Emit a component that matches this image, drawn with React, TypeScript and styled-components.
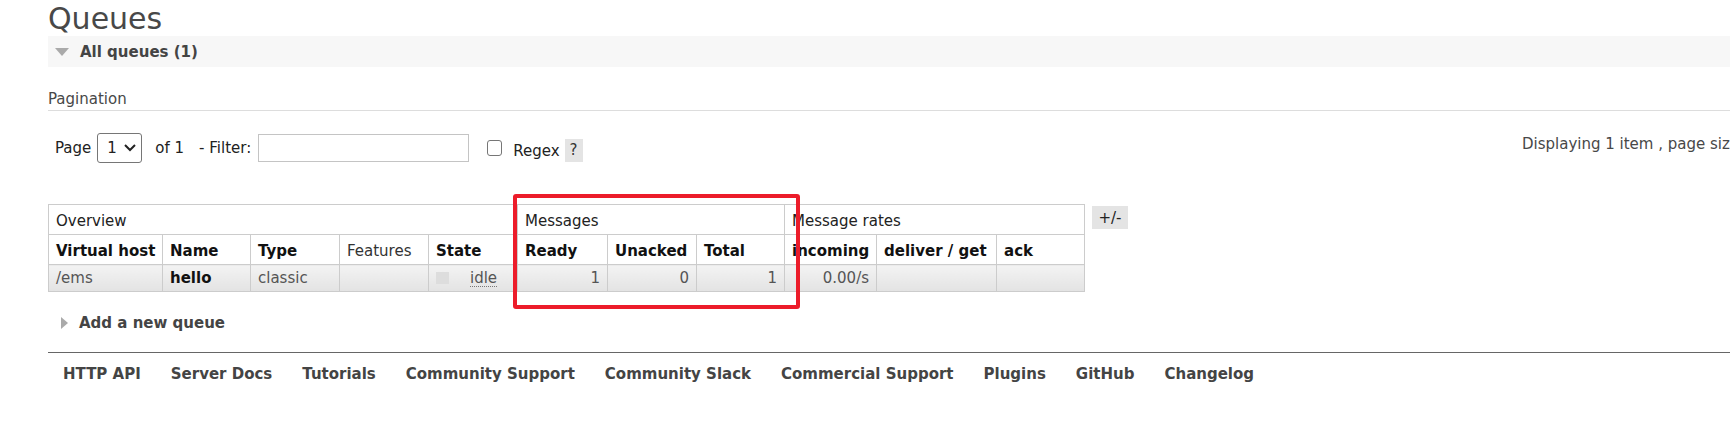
import styled, { createGlobalStyle } from 'styled-components';

const GlobalStyle = createGlobalStyle`
  html, body {
    margin: 0;
    padding: 0;
    overflow: hidden;
    background: #fff;
  }
  body {
    font-family: "DejaVu Sans", Verdana, sans-serif;
    font-size: 15px;
    color: #484848;
  }
`;

const Page = styled.div`
  position: relative;
  width: 1800px;
  padding-left: 48px;
  box-sizing: border-box;
`;

const Title = styled.h1`
  margin: 0;
  padding-top: 1px;
  font-size: 30px;
  line-height: 35px;
  font-weight: normal;
  color: #484848;
`;

const SectionBar = styled.div<{ $shaded?: boolean }>`
  display: flex;
  align-items: center;
  gap: 11px;
  height: 31px;
  padding-left: ${(p) => (p.$shaded ? '7px' : '13px')};
  background: ${(p) => (p.$shaded ? '#f7f7f7' : 'transparent')};
  font-weight: bold;
  color: #444;
`;

const SubHeading = styled.h3`
  margin: 23px 0 0;
  padding-bottom: 2px;
  font-size: 15px;
  line-height: 18px;
  font-weight: normal;
  color: #484848;
  border-bottom: 1px solid #dddddd;
`;

const PagerRow = styled.div`
  display: grid;
  grid-template-columns: 1474px max-content;
  margin-top: 22px;
`;

const PagerControls = styled.div`
  display: flex;
  align-items: center;
  height: 30px;
`;

const Label = styled.span<{ $ml?: number; $mt?: number }>`
  margin-left: ${(p) => p.$ml ?? 0}px;
  margin-top: ${(p) => p.$mt ?? 0}px;
  color: #222;
  line-height: 18px;
  white-space: nowrap;
`;

const FakeSelect = styled.div`
  display: flex;
  align-items: center;
  justify-content: space-between;
  box-sizing: border-box;
  width: 45px;
  height: 30px;
  margin-left: 6px;
  padding: 0 5px 0 9px;
  border: 1px solid #767676;
  border-radius: 3px;
  color: #222;
`;

const FilterInput = styled.input`
  box-sizing: border-box;
  width: 211px;
  height: 28px;
  margin-left: 7px;
  border: 1px solid #c4c4c4;
  border-radius: 0;
  font: inherit;
`;

const CheckBox = styled.span`
  box-sizing: border-box;
  width: 15px;
  height: 16px;
  margin-left: 18px;
  border: 1px solid #767676;
  border-radius: 3px;
  background: #fff;
`;

const HelpButton = styled.span`
  display: flex;
  align-items: center;
  justify-content: center;
  width: 18px;
  height: 23px;
  margin-left: 5px;
  margin-top: 4px;
  background: #e4e4e4;
  color: #333;
`;

const Displaying = styled.div`
  margin-top: 2px;
  line-height: 18px;
  white-space: nowrap;
  color: #484848;
`;

const TableRow = styled.div`
  display: flex;
  align-items: flex-start;
  gap: 7px;
  margin-top: 41px;
`;

const List = styled.table`
  border-collapse: collapse;
  table-layout: fixed;
  width: 1036px;

  th,
  td {
    border: 1px solid #cccccc;
    padding: 0 7px;
    white-space: nowrap;
    overflow: hidden;
    vertical-align: middle;
  }
`;

const GroupCell = styled.th`
  height: 27px;
  text-align: left;
  font-weight: normal;
  color: #222;
  padding-top: 2px !important;
`;

const HeadCell = styled.th<{ $light?: boolean }>`
  height: 27px;
  text-align: left;
  font-weight: ${(p) => (p.$light ? 'normal' : 'bold')};
  color: ${(p) => (p.$light ? '#333' : '#111')};
  padding-top: 2px !important;
`;

const DataRow = styled.tr`
  td {
    height: 26px;
    background: linear-gradient(#f3f3f3, #e3e3e3);
    color: #555;
  }
`;

const Cell = styled.td<{ $num?: boolean; $strong?: boolean }>`
  text-align: ${(p) => (p.$num ? 'right' : 'left')};
  font-weight: ${(p) => (p.$strong ? 'bold' : 'normal')};
  color: ${(p) => (p.$strong ? '#111' : '#555')} !important;
`;

const StateWrap = styled.div`
  display: flex;
  align-items: center;
  gap: 21px;
`;

const StateDot = styled.span`
  width: 13px;
  height: 12px;
  background: #dddddd;
`;

const Abbr = styled.abbr`
  text-decoration: none;
  border-bottom: 1px dotted #777;
  line-height: 16px;
  color: #555;
`;

const ToggleButton = styled.span`
  display: flex;
  align-items: center;
  justify-content: center;
  width: 36px;
  height: 23px;
  margin-top: 2px;
  background: #e4e4e4;
  color: #222;
`;

const AddQueue = styled(SectionBar)`
  margin-top: 22px;
  height: 18px;
  padding-left: 13px;
`;

const Footer = styled.ul`
  display: flex;
  margin: 20px 0 0;
  padding: 12px 0 0;
  list-style: none;
  border-top: 1px solid #666;
`;

const FooterLink = styled.li`
  padding: 0 15px;
  font-weight: bold;
  line-height: 18px;
  color: #444;
  white-space: nowrap;
`;

const Annotation = styled.div`
  position: absolute;
  left: 513px;
  top: 194px;
  width: 287px;
  height: 115px;
  box-sizing: border-box;
  border: 4px solid #ec1c2a;
  border-radius: 3px;
  pointer-events: none;
`;

const DownTriangle = () => (
  <svg width="14" height="8" viewBox="0 0 14 8">
    <polygon points="0,0 14,0 7,8" fill="#aaa" />
  </svg>
);

const RightTriangle = () => (
  <svg width="7" height="12" viewBox="0 0 7 12">
    <polygon points="0,0 7,6 0,12" fill="#aaa" />
  </svg>
);

const Chevron = () => (
  <svg width="12" height="8" viewBox="0 0 12 8">
    <polyline points="1,1 6,6 11,1" fill="none" stroke="#222" strokeWidth="2" />
  </svg>
);

const widths = [114, 88, 89, 89, 89, 90, 89, 88, 92, 120, 88];
const footerLinks = [
  'HTTP API',
  'Server Docs',
  'Tutorials',
  'Community Support',
  'Community Slack',
  'Commercial Support',
  'Plugins',
  'GitHub',
  'Changelog',
];

export default function App() {
  return (
    <>
      <GlobalStyle />
      <Page>
        <Title>Queues</Title>
        <SectionBar $shaded>
          <DownTriangle />
          <span>All queues (1)</span>
        </SectionBar>

        <SubHeading>Pagination</SubHeading>
        <PagerRow>
          <PagerControls>
            <Label $ml={7}>Page</Label>
            <FakeSelect>
              <span>1</span>
              <Chevron />
            </FakeSelect>
            <Label $ml={13}>of 1</Label>
            <Label $ml={15}>- Filter:</Label>
            <FilterInput type="text" />
            <CheckBox />
            <Label $ml={11} $mt={6}>Regex</Label>
            <HelpButton>?</HelpButton>
          </PagerControls>
          <Displaying>Displaying 1 item , page size up to: 100</Displaying>
        </PagerRow>

        <TableRow>
          <List>
            <colgroup>
              {widths.map((w, i) => (
                <col key={i} style={{ width: w }} />
              ))}
            </colgroup>
            <thead>
              <tr>
                <GroupCell colSpan={5}>Overview</GroupCell>
                <GroupCell colSpan={3}>Messages</GroupCell>
                <GroupCell colSpan={3}>Message rates</GroupCell>
              </tr>
              <tr>
                <HeadCell>Virtual host</HeadCell>
                <HeadCell>Name</HeadCell>
                <HeadCell>Type</HeadCell>
                <HeadCell $light>Features</HeadCell>
                <HeadCell>State</HeadCell>
                <HeadCell>Ready</HeadCell>
                <HeadCell>Unacked</HeadCell>
                <HeadCell>Total</HeadCell>
                <HeadCell>incoming</HeadCell>
                <HeadCell>deliver / get</HeadCell>
                <HeadCell>ack</HeadCell>
              </tr>
            </thead>
            <tbody>
              <DataRow>
                <Cell>/ems</Cell>
                <Cell $strong>hello</Cell>
                <Cell>classic</Cell>
                <Cell />
                <Cell>
                  <StateWrap>
                    <StateDot />
                    <Abbr title="idle">idle</Abbr>
                  </StateWrap>
                </Cell>
                <Cell $num>1</Cell>
                <Cell $num>0</Cell>
                <Cell $num>1</Cell>
                <Cell $num>0.00/s</Cell>
                <Cell />
                <Cell />
              </DataRow>
            </tbody>
          </List>
          <ToggleButton>+/-</ToggleButton>
        </TableRow>

        <AddQueue>
          <RightTriangle />
          <span>Add a new queue</span>
        </AddQueue>

        <Footer>
          {footerLinks.map((l) => (
            <FooterLink key={l}>{l}</FooterLink>
          ))}
        </Footer>

        <Annotation />
      </Page>
    </>
  );
}
